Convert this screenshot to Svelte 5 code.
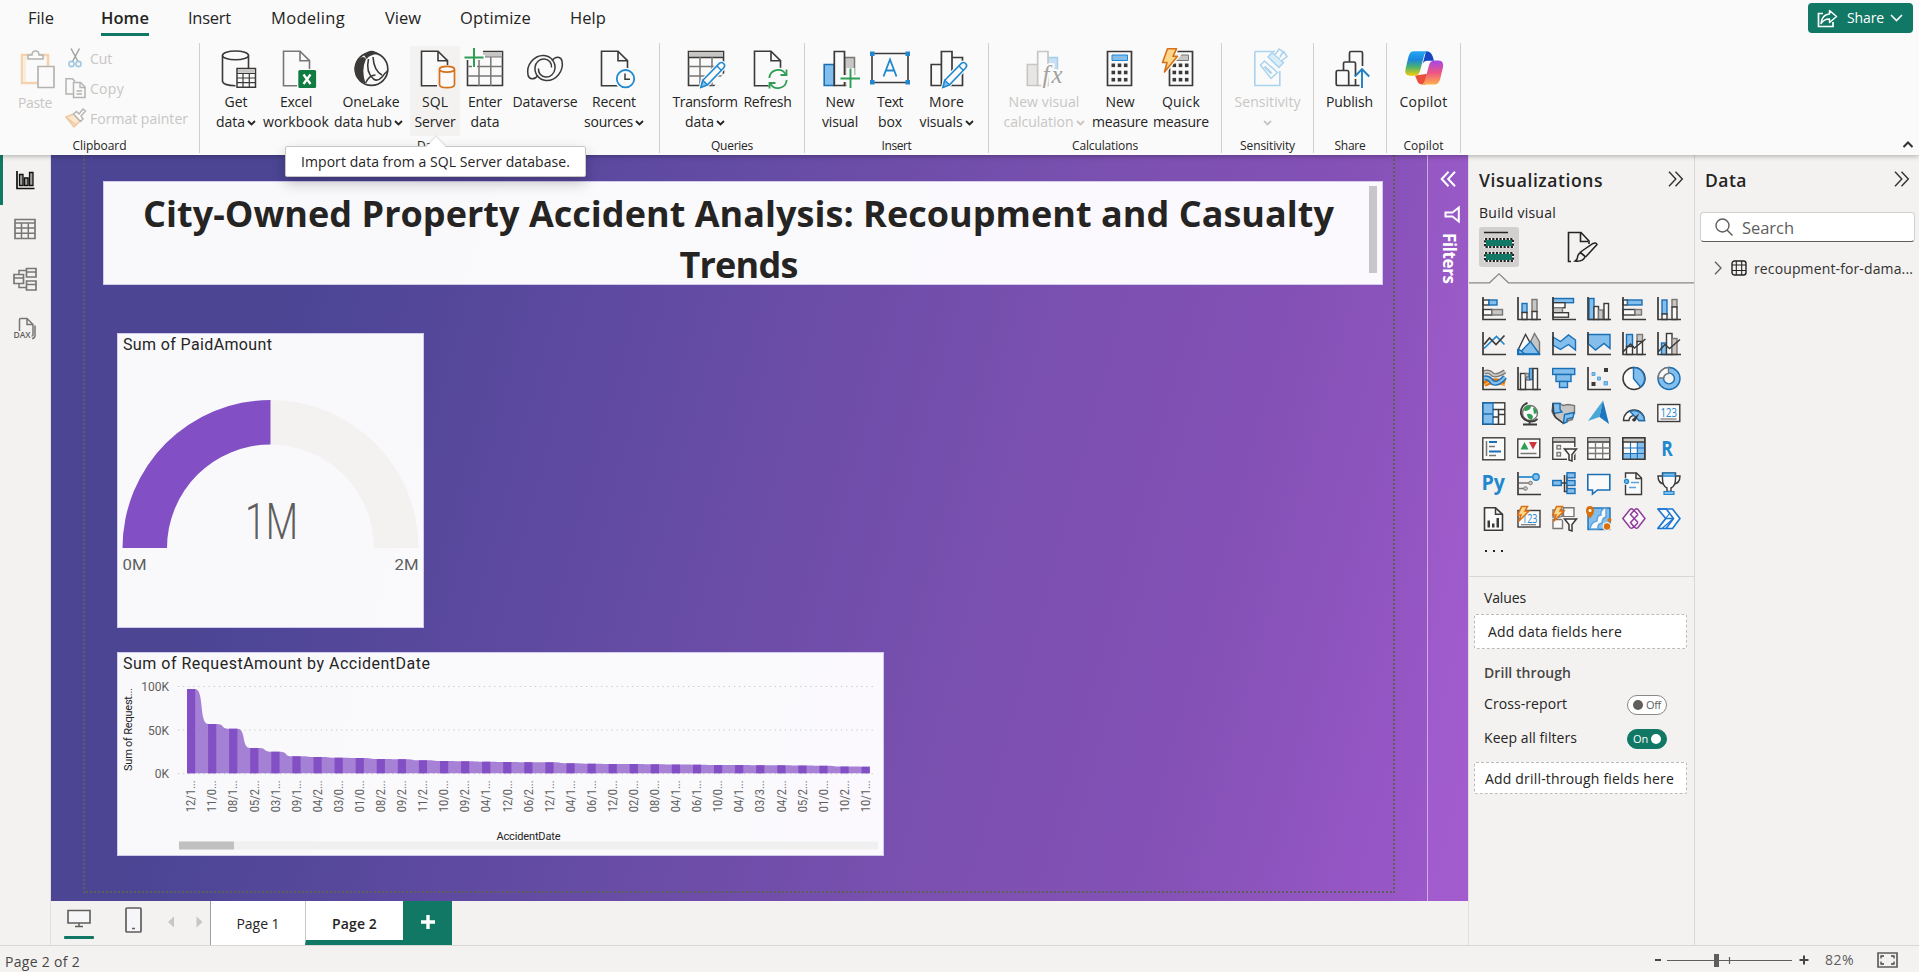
<script>
  // Spreads a text run over a given width by adjusting its tracking.
  function fit(node, width) {
    if (!width) return;
    const natural = node.getBoundingClientRect().width;
    node.style.letterSpacing = (width - natural) / node.textContent.length + 'px';
  }

  const D = '#3b3a39';
  const B = '#1a6fb5';
  const F = '#83beec';
  const G = '#c8c6c4';
  const doc = (x, c = D) =>
    `<path d="M${x} 3.2h16.5l9.5 9.5V37.8h-26z" fill="#fafafa" stroke="${c}" stroke-width="1.6"/><path d="M${x + 16.5} 3.2v9.5h9.5" fill="none" stroke="${c}" stroke-width="1.6"/>`;
  const pencil = `<path d="M16 39.3l1.8-7L34.6 15.2q2-1.6 4 .3t.2 4.2L22.5 36.8z" fill="#fafafa" stroke="#fafafa" stroke-width="4"/><path d="M16 39.3l1.8-7L34.6 15.2q2-1.6 4 .3t.2 4.2L22.5 36.8z" fill="#fafafa" stroke="#1f88cf" stroke-width="1.6"/><path d="M16 39.3l1.8-7 4.7 4.5z" fill="${F}" stroke="#1f88cf" stroke-width="1.4"/><path d="M32 18l4.5 4.5" stroke="#1f88cf" stroke-width="1.4"/>`;
  const keys = (x) => {
    let s = '';
    for (let r = 0; r < 3; r++) for (let c = 0; c < 3; c++) s += `<rect x="${x + c * 6.2}" y="${15.5 + r * 7.2}" width="3.6" height="3.6" fill="${D}"/>`;
    return s;
  };
  const swirl = 'M13 27.5C9 32.5 4 31.500 3 27C1 17 9 7 19 7.500C26 8 30.500 14 30 20.500C29.500 26 25 29.500 20.500 29C16 28.500 13 25 13.500 20.500';

  const ribbonIcons = {
    get: `<path d="M6.5 7.5V33.5q1 4 13 4.3V20h13V7.5" fill="#fafafa"/><path d="M6.5 7.5V33.5q1 3.9 13 4.3M32.500 7.5V20" fill="none" stroke="${D}" stroke-width="1.6"/><ellipse cx="19.5" cy="7.4" rx="13" ry="4.4" fill="#fafafa" stroke="${D}" stroke-width="1.6"/><path d="M21 20.5h18.5v18.8H21z" fill="#fafafa" stroke="${D}" stroke-width="1.5"/><path d="M22 21.5h16.5v3.3H22z" fill="${G}"/><path d="M21 25.5h18.5M21 30h18.5M21 34.7h18.5M27 25.5v14M33.3 25.5v14" stroke="${D}" stroke-width="1.2"/>`,
    excel: doc(7.5, '#797775') + `<rect x="21" y="21" width="20" height="20" fill="#fafafa"/><rect x="22.3" y="22" width="17.8" height="18" rx="1.5" fill="#107c41"/><path d="M27.5 26.5l7 9.5M34.5 26.5l-7 9.5" stroke="#fff" stroke-width="2.3"/>`,
    onelake: `<circle cx="20.5" cy="21" r="16.3" fill="#fafafa" stroke="${D}" stroke-width="1.7"/><path d="M13 7Q20-1 28.500 6.500q-8-1-13 4.500z" fill="${D}"/><path d="M10 9.500q3-1.500 5 1.500Q10 22 14.500 35.500Q3 31 3.500 20 4.500 13 10 9.500z" fill="${D}"/><path d="M17.500 11q-3 13 5 20 4 3 8.500-2 3-4 6-6.500M22 9q1 14 9 18M14.500 35q4-8 10-8" fill="none" stroke="${D}" stroke-width="1.6"/>`,
    sql: doc(6.5) + `<path d="M22 17h20v25H22z" fill="#f3f2f1"/><path d="M24.5 21.5v15q0 3.2 7.5 3.2t7.5-3.2v-15" fill="#fafafa" stroke="#d67119" stroke-width="1.7"/><ellipse cx="32" cy="21.3" rx="7.5" ry="2.9" fill="#fafafa" stroke="#d67119" stroke-width="1.7"/>`,
    enter: `<path d="M2.5 3.5h35v34h-35z" fill="#fafafa" stroke="${D}" stroke-width="1.6"/><path d="M3 4h34v5H3z" fill="${G}"/><path d="M2.5 9h35" stroke="#797775" stroke-width="1"/><path d="M2.5 18.5h35M2.5 28h35M14 9v29M25.8 9v29" stroke="#797775" stroke-width="1.5"/><path d="M0 0h18v7h2v5h-8v8H7v-8H0z" fill="#fafafa"/><path d="M9 0v19M-.5 9.5h19" stroke="#2f9e54" stroke-width="2"/>`,
    dataverse: `<g fill="none" stroke="${D}" stroke-width="1.5"><path d="${swirl}"/><path d="${swirl}" transform="rotate(180 20 20)"/></g>`,
    recent: doc(7.5) + `<circle cx="31.5" cy="30.7" r="11" fill="#fafafa"/><circle cx="31.5" cy="30.7" r="8.7" fill="#fafafa" stroke="#1f88cf" stroke-width="1.8"/><path d="M31 25.5v5.7h5" fill="none" stroke="${D}" stroke-width="1.5"/>`,
    transform: `<path d="M3.5 3.5h35v34h-35z" fill="#fafafa" stroke="${D}" stroke-width="1.6"/><path d="M4 4h34v5H4z" fill="${G}"/><path d="M3.5 9.5h35" stroke="${D}" stroke-width="1.3"/><path d="M3.5 18.5h35M3.5 28h35M15 9v29M27 9v29" stroke="#797775" stroke-width="1.5"/><path d="M28 40l10-14 4-2v18H24z" fill="#fafafa"/>` + pencil,
    refresh: doc(6.5) + `<circle cx="30" cy="31" r="11.5" fill="#fafafa"/><path d="M21.3 30a8.8 8.8 0 0 1 16.5-3.5M38.7 32a8.8 8.8 0 0 1-16.5 3.5" fill="none" stroke="#2f9e54" stroke-width="1.8"/><path d="M38.5 21.500v5.500h-6M21.500 40.500V35h6" fill="none" stroke="#2f9e54" stroke-width="1.8"/>`,
    newvisual: `<path d="M24.5 9.5h10v28h-10z" fill="${G}" stroke="#797775" stroke-width="1.5"/><path d="M4.2 16.5h10v21h-10z" fill="${F}" stroke="${B}" stroke-width="1.6"/><path d="M14.3 3.5h10.2v34H14.3z" fill="#fafafa" stroke="${D}" stroke-width="1.7"/><path d="M26.500 20h8v7H42v14H26.500v-7H22v-7h4.500z" fill="#fafafa"/><path d="M30.5 20.5v19.500M20.500 30.500h19.500" stroke="#2f9e54" stroke-width="1.9"/>`,
    textbox: `<path d="M2 5.5h36v29H2z" fill="#fafafa" stroke="${D}" stroke-width="1.6"/><path d="M0 3.5h4.5v4.5H0zM35.5 3.5H40v4.5h-4.5zM0 32h4.5v4.5H0zM35.5 32H40v4.5h-4.5z" fill="#1f88cf"/><path d="M13.5 28.5L20 11.5l6.5 17M16 22.500h8" fill="none" stroke="#1f88cf" stroke-width="1.8"/>`,
    more: `<path d="M25 9.5h10.5v28H25zM4.2 16.5h10.2v21H4.2zM14.4 3.5H25v34H14.4z" fill="#fafafa" stroke="${D}" stroke-width="1.7"/>` + pencil,
    nvcalc: `<path d="M24 9.5h9.5v12H24z" fill="#c7e0f4" stroke="#a6cdea" stroke-width="1.5"/><path d="M3.3 16.5h10.4v21H3.3z" fill="#e8e6e4" stroke="${G}" stroke-width="1.6"/><path d="M13.7 3.5H24v34H13.7z" fill="#fafafa" stroke="${G}" stroke-width="1.7"/><text x="18.5" y="34.5" font-family="Liberation Serif, serif" font-style="italic" font-size="25" fill="#a3a2a0" stroke="#fafafa" stroke-width="4" paint-order="stroke" textLength="20">fx</text>`,
    measure: `<path d="M7.5 3.5h24v34h-24z" fill="#fafafa" stroke="${D}" stroke-width="1.7"/><path d="M12 7h15.5v5.5H12z" fill="${F}" stroke="#1f88cf"/>` + keys(11.5),
    quick: `<path d="M8.5 3.5h23v34h-23z" fill="#fafafa" stroke="${D}" stroke-width="1.7"/><path d="M12 7h15.5v5.5H12z" fill="${G}" stroke="#797775"/>` + keys(11.5) + `<path d="M6.5.8h9L12 8.3h4.5L3.500 24l2.500-9.500H1.500z" fill="#fafafa" stroke="#fafafa" stroke-width="4"/><path d="M6.5.8h9L12 8.3h4.5L3.500 24l2.500-9.500H1.500z" fill="#fcd68a" stroke="#d67119" stroke-width="1.6" stroke-linejoin="round"/>`,
    sensitivity: `<path d="M6.8 3.5H27M31.8 23v14.5h-25v-34" fill="none" stroke="#a9d3ee" stroke-width="1.6"/><path d="M12.5 17l4-4 13 11.500-6.500 6z" fill="#fafafa" stroke="#a9d3ee" stroke-width="1.5"/><path d="M16.5 18.5l7 7" stroke="#a9d3ee" stroke-width="2.4"/><path d="M20 9l4-4.500 11.500 10L31 19.500z" fill="#d9edf9" stroke="#a9d3ee" stroke-width="1.5"/><path d="M27 7l4-6 4 2.500-3 6M32 8l4-4 3 4.500-6.500 5" fill="#fafafa" stroke="#a9d3ee" stroke-width="1.5"/>`,
    publish: `<path d="M13.5 23V15.5q0-1.5 1.5-1.5h9q1.5 0 1.5 1.5V28M19.500 14V5q0-1.5 1.5-1.5h10q1.5 0 1.5 1.5V18M29.500 37.500H8q-1.8 0-1.8-1.8V24q0-1.5 1.5-1.5h9.500q1.5 0 1.5 1.5v13.500M25.500 31v6" fill="none" stroke="${D}" stroke-width="1.7"/><path d="M32 21v19M24.8 28.500L32 21l7.200 7.500" fill="none" stroke="#1f7fc0" stroke-width="1.9"/>`,
    copilot: `<defs><linearGradient id="cpa" x1="0" y1="0" x2="0" y2="1"><stop offset="0" stop-color="#21a8f5"/><stop offset=".35" stop-color="#1b86dd"/><stop offset=".65" stop-color="#4db36b"/><stop offset="1" stop-color="#f5cb0b"/></linearGradient><linearGradient id="cpb" x1="0" y1="0" x2="0" y2="1"><stop offset="0" stop-color="#a348e8"/><stop offset=".5" stop-color="#ee5583"/><stop offset="1" stop-color="#fdb04c"/></linearGradient></defs><path d="M22 3.2q5 0 6.5 4.8l1.5 4.8h-6.5q-4 0-5 4z" fill="#1646c2"/><path d="M11 27.5l2.5 6q1 3 5 3H22l4-11z" fill="#ea4f3b"/><path d="M9.5 3.2H24q-3 .8-4 4.5L16 23q-1.2 4.7-5.5 4.7H6q-6 0-4.3-7.500L4.500 8.500Q6 3.200 9.500 3.200z" fill="url(#cpa)"/><path d="M30.5 36.6H17q3-.8 4-4.5l4-14.800q1.200-4.700 5.500-4.700h4q6 0 4.300 7.500l-2.600 11q-1.500 5.500-5.700 5.500z" fill="url(#cpb)"/>`
  };

  const groups = [
    { name: 'Data', nw: 25, w: 460, pad: 12, items: [
      { i: 'get', w: 48, a: ['Get', 23], b: ['data', 29], c: 1 },
      { i: 'excel', w: 72, a: ['Excel', 32], b: ['workbook', 66] },
      { i: 'onelake', w: 78, a: ['OneLake', 57], b: ['data hub', 58], c: 1, shift: -1 },
      { i: 'sql', w: 50, a: ['SQL', 26], b: ['Server', 41], hot: 1 },
      { i: 'enter', w: 50, a: ['Enter', 34], b: ['data', 29] },
      { i: 'dataverse', w: 70, a: ['Dataverse', 65] },
      { i: 'recent', w: 68, a: ['Recent', 44], b: ['sources', 49], c: 1 }] },
    { name: 'Queries', nw: 42, w: 145, pad: 12, items: [
      { i: 'transform', w: 66, a: ['Transform', 65], b: ['data', 29], c: 1 },
      { i: 'refresh', w: 59, a: ['Refresh', 48] }] },
    { name: 'Insert', nw: 30, w: 184, pad: 10, items: [
      { i: 'newvisual', w: 50, a: ['New', 29], b: ['visual', 36] },
      { i: 'textbox', w: 50, a: ['Text', 26], b: ['box', 24] },
      { i: 'more', w: 63, a: ['More', 35], b: ['visuals', 43], c: 1 }] },
    { name: 'Calculations', nw: 66, w: 233, pad: 7, items: [
      { i: 'nvcalc', w: 96, a: ['New visual', 71], b: ['calculation', 70], c: 1, off: 1 },
      { i: 'measure', w: 56, a: ['New', 29], b: ['measure', 56] },
      { i: 'quick', w: 66, a: ['Quick', 38], b: ['measure', 56] }] },
    { name: 'Sensitivity', nw: 55, w: 92, pad: 5, items: [
      { i: 'sensitivity', w: 81, a: ['Sensitivity', 66], c: 1, off: 1 }] },
    { name: 'Share', nw: 31, w: 73, pad: 5, items: [{ i: 'publish', w: 61, a: ['Publish', 47] }] },
    { name: 'Copilot', nw: 40, w: 74, pad: 6, items: [{ i: 'copilot', w: 61, a: ['Copilot', 48] }] }
  ];

  const menu = [['File', 26, 47], ['Home', 48, 39], ['Insert', 43, 40], ['Modeling', 74, 40], ['View', 36, 39], ['Optimize', 71, 39], ['Help', 36, 0]];

  const AX = `<path d="M1 0V22.5H24" fill="none" stroke="${D}" stroke-width="1.7"/>`;
  const r = (x, y, w, h, f = '#fafafa', s = D) => `<rect x="${x}" y="${y}" width="${w}" height="${h}" fill="${f}" stroke="${s}" stroke-width="1.4"/>`;
  const l = (d, s = D, w = 1.5) => `<path d="${d}" fill="none" stroke="${s}" stroke-width="${w}"/>`;
  const p = (d, f, s, w = 1.4) => `<path d="${d}" fill="${f}" stroke="${s}" stroke-width="${w}"/>`;
  const g7 = '#797775';
  const bolt = p('M4.5-.5h6L8 4h4L1.5 14.5 4 8H.8z', '#fcd68a', '#d67119', 1.5);
  const funnel = p('M12.5 12h12l-4.500 5.500V24l-3-1v-5.500z', '#fafafa', '#f3f2f1', 4) + p('M12.5 12h12l-4.500 5.500V24l-3-1v-5.500z', '#fafafa', D, 1.5);
  const word = (t, x, y, size, w, c, wt = 400) => `<text x="${x}" y="${y}" font-family="Open Sans, sans-serif" font-size="${size}" font-weight="${wt}" fill="${c}" textLength="${w}" lengthAdjust="spacingAndGlyphs">${t}</text>`;

  const viz = [
    r(1, 3, 6, 5) + r(7, 3, 8, 5, F, B) + r(1, 12.5, 9, 5.5) + r(10, 12.5, 10.5, 5.5, G, g7) + AX,
    r(5, 6.5, 5, 9, F, B) + r(5, 15.5, 5, 7) + r(15, 2.5, 5, 12, G, g7) + r(15, 14.5, 5, 8) + AX,
    r(1, 1.5, 20.5, 4.2, F, B) + r(1, 5.7, 12, 5) + r(1, 10.7, 9.5, 5, G, g7) + r(1, 15.7, 15.5, 4.5) + AX,
    r(2, 1.5, 5, 21, F, B) + r(7, 9.5, 4.5, 13) + r(11.5, 13, 4.5, 9.5, G, g7) + r(17, 6.5, 4.5, 16) + AX,
    r(1, 3, 4.5, 5) + r(5.5, 3, 14.5, 5, F, B) + r(1, 12.5, 12, 5.5) + r(13, 12.5, 6.5, 5.5, G, g7) + AX,
    r(5, 3, 5, 14, F, B) + r(5, 17, 5, 5.5) + r(15, 2.5, 5, 7.5, G, g7) + r(15, 10, 5, 12.5) + AX,
    l('M2 16.5L14.5 4.5l8 8', '#1f88cf', 1.7) + l('M2 12.5l5.5-6.5 6.5 6.5L22.5 3.5', D, 1.7) + AX,
    p('M12 13L17.5 1.5 22.5 10V21z', G, g7) + p('M1 18L8.5 2.5 16 16v6H1z', '#fafafa', D) + p('M1.5 22L13.500 9.500 22.500 22z', F, B) + p('M1.500 17L8 22H1.500z', F, B) + l('M.8 17v5.5H23', B),
    p('M1 5l7.5 4.5 8-6.5 7 5v10l-7-5.5-8 5L1 13z', F, B) + AX,
    p('M1 2.5h22v14l-6-5-8.500 6.500L1 11.500z', F, B) + AX,
    r(4.5, 2.5, 6, 12, F, B) + r(4.5, 14.5, 6, 8) + r(15, 2.5, 5.5, 7, G, g7) + r(15, 9.5, 5.5, 13) + l('M1 20l7.5-8 4 4 11-9') + AX,
    r(4.5, 11, 5, 11.5, F, B) + r(9.5, 1.5, 5.5, 21) + r(15, 6.5, 5, 16, G, g7) + l('M1 20l7-7.500 4.500 4L23 7.500') + AX,
    l('M2 17q9-5 21-1', '#e3770c', 6) + l('M2 18q9-7 21 1', '#f9b25c', 1.2) + l('M2 5.500q5-2 8 1.500t13-2.500', g7, 4.500) + l('M2 5.500q5-2 8 1.500t13-2.500', G, 2) + l('M2 11q5-1 8 4 5 4 13-5', B, 5) + l('M2 11q5-1 8 4 5 4 13-5', F, 2.300) + AX,
    r(3.5, 6.5, 5, 16) + r(8.5, 6.5, 3.5, 4, G, g7) + r(9.5, 10, 3.5, 3, G, g7) + r(12.5, 1.5, 3, 11, F, B) + r(16, 1.5, 4.5, 21) + AX,
    r(.7, 1.5, 22, 6, F, B) + r(4, 7.5, 15, 7, F, B) + r(7.5, 14.5, 8, 6, F, B),
    AX + `<path d="M17 1h4v4h-4zM4.5 15h4v4h-4z" fill="${D}"/><path d="M5 5.5h3v3H5zM10.5 10h3v3h-3zM17 14.5h3.5v3.5H17z" fill="${F}" stroke="#5ba3dc"/>`,
    `<circle cx="12" cy="11.5" r="11" fill="#fafafa" stroke="${D}" stroke-width="1.5"/>` + p('M11.5.5v11l7 8.5A11 11 0 0 0 11.500.5z', F, B),
    `<circle cx="12" cy="11.5" r="8.2" fill="none" stroke="${B}" stroke-width="7"/><circle cx="12" cy="11.5" r="8.2" fill="none" stroke="${F}" stroke-width="4.2"/>` + p('M1 11A11 11 0 0 1 11.5.5V6.500A5.500 5.500 0 0 0 6.500 11z', '#fafafa', g7),
    r(.8, .8, 22, 21.5) + `<path d="M1 1h10v21H1z" fill="${F}" stroke="${B}" stroke-width="1.4"/>` + l('M1 12h10', B) + l('M11 7.5h12M16.5 7.500V22M11 15h5.500M16.500 12.500h6.500M20 12.500'),
    `<circle cx="13" cy="11" r="7.5" fill="#fafafa" stroke="${g7}" stroke-width="1.4"/><path d="M8 5q4-3 6-1 0 4-5 5-2 0-2-1zM16 6q4 0 4 5l-3 1zM10 12q4-1 6 2l-1 4q-5-1-5-6z" fill="#2f9e54"/>` + l('M10.500.8Q3 4 4 12q2 7 10 7.500 4 0 6.500-2.500M12.500 19.500v3M6 22.500h14', D, 1.8),
    p('M1 1.5h7l3 2 5-1 6.5 1v8l-2 2v4l-5 1.500-4 2.500-5-4-4.500-4-2-4z', G, g7) + p('M1 1.500h7v6l2 2.500-8 1.500z', F, B) + p('M12.500 12.500l9.500-2-1 5-6 1.500v3l-3.500 1.500z', F, B) + l('M1 1.500v8l2.500 6L11 21'),
    `<path d="M16-1.5L1 19l11.500-4z" fill="#49a8d8"/><path d="M16-1.5L12.5 15l9.500 7z" fill="#1c76c0"/>`,
    p('M1.500 18.500A10.500 10.500 0 0 1 22.500 18.500H17a5 5 0 0 0-10 0z', '#fafafa', D) + p('M8 9.500A10.500 10.500 0 0 1 22.500 18.500H17L12 13.500z', F, B) + `<path d="M10 17.500L17.500 11 13.500 19q-3 1.500-3.500-1.500z" fill="${D}"/>`,
    r(.8, 2.5, 22, 17) + word('123', 3.5, 14.5, 12, 16.5, '#1f88cf') + l('M3.5 17h16', g7, 1.2),
    r(.8, .8, 22, 22) + l('M4.5 4v15', g7) + l('M7 5h8M7 14.5h12', B, 1.8) + l('M7 9.5h6M7 18.5h7', g7),
    r(.8, 2, 22, 18.5) + `<path d="M3.5 12.5L7.5 5l4 7.500z" fill="#2f9e54"/><path d="M12 5h8l-4 7.500z" fill="#d13438"/>` + l('M3.5 16.5h16', g7),
    r(.8, .8, 22, 21.5) + `<path d="M1.5 1.5h20.6v3H1.500z" fill="${G}"/>` + l('M1 5h22') + r(5, 8.5, 3.5, 3.5, '#fafafa', g7) + r(5, 15.5, 3.5, 3.5, '#fafafa', g7) + funnel,
    r(.8, .8, 22, 21.5) + `<path d="M1.5 1.5h20.6v3H1.500z" fill="${G}"/>` + l('M1 5h22') + l('M1 11h22M1 16.5h22M8.5 5v17.500M15.700 5v17.500', g7, 1.3),
    r(.8, .8, 22, 21.5) + `<path d="M1.5 1.5h20.6v3H1.500z" fill="${G}"/><path d="M15 5h7.5v17H15zM1.500 16.500H15V22H1.500z" fill="${F}"/>` + l('M1 11h22M1 16.5h22M8.5 5v17.500M15.300 5v17.500', B, 1.1) + l('M1 5h22M.8.8h22v21.5H.8z'),
    word('R', 4.3, 19, 21, 11.5, '#1f88cf', 700),
    word('Py', -.5, 18, 21, 23.5, '#1f88cf', 700),
    AX + l('M2 5h14', '#1f88cf', 1.7) + l('M2 11h10M2 16.5h5', g7) + `<circle cx="19" cy="5" r="3.2" fill="${F}" stroke="#1f88cf" stroke-width="1.4"/><circle cx="13.5" cy="11" r="1.8" fill="${G}" stroke="${g7}"/><circle cx="8.5" cy="16.5" r="1.8" fill="${G}" stroke="${g7}"/>`,
    l('M9 11h6M15 3.5v16M12.500 3v16.500h2.500') + r(.8, 8.5, 8.5, 5, F, B) + r(15, .8, 8, 5, F, B) + r(15, 8.5, 8, 5, F, B) + r(15, 16.5, 8, 5, F, B),
    p('M.8 2.5h22v15.500H10.500L5.500 22v-4H.8z', '#fafafa', B, 1.6),
    p('M3.5 1h11l5 5v16.500h-16z', '#fafafa', D) + l('M14 1v5.500h5.500') + l('M9 10.500h8M7 15.500h7', '#5ba3dc') + `<circle cx="4.5" cy="9.5" r="3.5" fill="#f3f2f1"/><circle cx="4.5" cy="9.5" r="2" fill="${F}" stroke="#1f88cf" stroke-width="1.3"/>`,
    p('M6 4H1q0 8 7 8M18 4h5q0 8-7 8', '#fafafa', D) + p('M5.5 1h13v6q0 7-4.500 9v3.500h-4V16q-4.500-2-4.500-9z', '#fafafa', D) + `<path d="M6 1.2h12v3H6zM7 19.500h10v3H7z" fill="${F}" stroke="#1f88cf" stroke-width="1.2"/>`,
    p('M2.5.8h11l7 6.500v16h-18z', '#fafafa', D, 1.6) + l('M13.5.8v6.500h7') + `<path d="M5.5 13.5h2.5v7H5.500zM10 16.500h2.500v4H10zM14.500 11H17v9.500h-2.500z" fill="${D}"/>`,
    r(1, 3.5, 22, 16.5) + word('123', 5, 15.5, 12, 15.5, '#1f88cf') + l('M4 17.7h15', g7, 1.2) + bolt,
    p('M11.5.8h10.500v9H11.500zM1 12.500h9.500v9H1zM1 3h9v7H1z', '#fafafa', g7) + bolt + funnel,
    r(1, 1, 22, 21.5, F, B) + p('M18 1q-5 2-4 7-4 0-4 6-6 1-7 8h8q-1-5 4-6 0-5 4-6V1z', '#fafafa', '#5ba3dc') + `<path d="M3-1Q-1-1-1 4q0 3 4 7.500Q7 7 7 4q0-5-4-5z" fill="#d9700a"/><circle cx="3" cy="3.5" r="1.5" fill="#fff"/><circle cx="20" cy="19.5" r="4.5" fill="#f3f2f1"/><circle cx="20" cy="19.5" r="3.2" fill="#d9700a"/><circle cx="22.5" cy="13" r="2" fill="#d9700a"/>`,
    `<g fill="#fafafa" stroke="#8f3a9c" stroke-width="1.5"><path d="M.8 11.5L8 2.500q1.500-1.500 3 0l1 1 1-1q1.500-1.500 3 0l7 9-7 9q-1.500 1.500-3 0l-1-1-1 1q-1.500 1.500-3 0z"/><path d="M12 3.500L8.500 7.500l7.500 8M16 7.500l-7.500 8 3.500 4.500M12 3.500l4 4M12 20l4-4.500M20 7.500" fill="none"/></g>`,
    `<g fill="#fafafa" stroke="#1a77d2" stroke-width="1.6" stroke-linejoin="round"><path d="M.8 2H15.500l7.500 9.500-7.500 10H.8l8-10z"/><path d="M.8 2l8.500 0 7.200 9.500M8.800 11.500h7.700L9 21.500M15.500 2" fill="none"/><path d="M.8 21.500L12.500 6.500M5 21.500L16.500 11.500" fill="none" stroke-width="1.2"/></g>`
  ];

  const tops = [689, 724, 728.7, 748, 751.7, 756.3, 757, 757.7, 758, 759, 759.2, 760.3, 761, 761.3, 761.7, 762, 762.2, 762.3, 763.3, 763.7, 764, 764, 764.3, 764.6, 764.7, 765, 765, 765.2, 765.3, 765.6, 765.8, 766.6, 766.7];
  const dates = ['12/1', '11/0', '08/1', '05/2', '03/1', '09/1', '04/2', '03/0', '01/0', '08/2', '09/2', '11/2', '10/0', '09/2', '04/1', '12/0', '06/2', '12/1', '04/1', '06/1', '12/0', '02/0', '08/0', '04/1', '06/1', '10/0', '04/1', '03/3', '04/2', '05/2', '01/0', '10/2', '10/1'];
  // Plot space starts at the card's top left corner.
  const bars = tops.map((y, i) => ({ x: 69 + i * 21.08, y: y - 653, label: dates[i] + '...' }));
  const BW = 8.2;
  const base = 120.3;
  let ribbonPath = `M${bars[0].x} ${base}V${bars[0].y}`;
  bars.forEach((b, i) => {
    const e = b.x + BW;
    ribbonPath += `H${e}`;
    const n = bars[i + 1];
    if (n) ribbonPath += `C${e + 9} ${b.y} ${n.x - 9} ${n.y} ${n.x} ${n.y}`;
  });
  ribbonPath += `V${base}Z`;
</script>

{#snippet t(text, w)}<span class="t" use:fit={w}>{text}</span>{/snippet}
{#snippet caret()}<svg class="caret" width="9" height="6" viewBox="0 0 9 6"><path d="M1 1l3.500 3.500L8 1" fill="none" stroke="currentColor" stroke-width="1.8" /></svg>{/snippet}
{#snippet double(flip, c)}<svg width="16" height="16" viewBox="0 0 16 16" style:transform={flip ? 'scaleX(-1)' : null}><path d="M1 .8L7.800 8 1 15.200M7.500.8L14.300 8l-6.800 7.200" fill="none" stroke={c} stroke-width={flip ? 2 : 1.4} /></svg>{/snippet}

<div class="app">
  <header>
    <div class="menubar">
      <nav>
        {#each menu as [name, w, gap]}
          <div class="tab" class:active={name === 'Home'} style:width="{w}px" style:margin-right="{gap}px">{@render t(name, w)}</div>
        {/each}
      </nav>
      <button class="share">
        <svg width="21" height="19" viewBox="0 0 21 19"><path d="M6 4.500H1.500v13h14.500V13" fill="none" stroke="#fff" stroke-width="1.7" /><path d="M12.500 1.500l7 6-7 6V10q-5-.3-8.500 4.500Q5 5.500 12.500 5z" fill="none" stroke="#fff" stroke-width="1.5" stroke-linejoin="round" /></svg>
        {@render t('Share', 37)}
        <svg width="13" height="8" viewBox="0 0 13 8"><path d="M1 1l5.500 5.500L12 1" fill="none" stroke="#fff" stroke-width="1.6" /></svg>
      </button>
    </div>
    <div class="ribbon">
      <section class="group clipboard">
        <div class="clip off">
          <div class="paste">
            <svg width="36" height="40" viewBox="0 0 36 40"><path d="M2 6h26v28H2z" fill="#fafafa" stroke="#f5d3b0" stroke-width="2.6" /><path d="M5 8.500h20M5 8v24" stroke="#fbe7cd" stroke-width="1.5" /><path d="M8 10V6h4q0-4 3.500-4T19 6h4v4z" fill="#fafafa" stroke="#b5b3b1" stroke-width="1.5" /><path d="M18 17.500h16v21H18z" fill="#fafafa" stroke="#b5b3b1" stroke-width="1.7" /></svg>
            {@render t('Paste', 34)}
          </div>
          <div class="clips">
            <div><svg width="22" height="20" viewBox="0 0 22 20"><path d="M6 .5l7 13M14.500.5l-7 13" stroke="#a3a2a0" stroke-width="1.5" /><circle cx="6.500" cy="16" r="2.600" fill="none" stroke="#a3c8e0" stroke-width="1.6" /><circle cx="13.500" cy="16" r="2.600" fill="none" stroke="#a3c8e0" stroke-width="1.6" /></svg>{@render t('Cut', 22)}</div>
            <div><svg width="22" height="20" viewBox="0 0 22 20"><path d="M8 16H1V.8h6.500L10 3.500" fill="none" stroke="#b5b3b1" stroke-width="1.5" /><path d="M8.500 4.500h7l4.500 4.500v10.500H8.500z" fill="none" stroke="#b5b3b1" stroke-width="1.5" /><path d="M15 4.500V9.500h5M11.500 13h5.500M11.500 16h5.500" fill="none" stroke="#b5b3b1" stroke-width="1.3" /></svg>{@render t('Copy', 34)}</div>
            <div><svg width="22" height="20" viewBox="0 0 22 20"><path d="M1 9l8-3 6 7-6 6z" fill="#fbe7cd" stroke="#f0c79d" stroke-width="1.5" /><path d="M2 10l9 7" stroke="#f0c79d" stroke-width="1.5" /><path d="M8.500 6l3-2.500 2.500 2.500L18 1l2.500 2L16 8l2 3-2.500 2.500z" fill="#fafafa" stroke="#b5b3b1" stroke-width="1.4" /></svg>{@render t('Format painter', 98)}</div>
          </div>
        </div>
        <footer>{@render t('Clipboard', 54)}</footer>
      </section>
      {#each groups as g}
        <section class="group" style:width="{g.w}px">
          <div class="items" style:padding-left="{g.pad}px">
            {#each g.items as it}
              <div class="item" class:hot={it.hot} class:off={it.off} style:width="{it.w}px">
                <svg class="ri" width="40" height="40" viewBox="0 0 40 40">{@html ribbonIcons[it.i]}</svg>
                <div class="line">{@render t(it.a[0], it.a[1])}</div>
                <div class="line" class:wide={it.shift}>{#if it.b}{@render t(it.b[0], it.b[1])}{/if}{#if it.c}{@render caret()}{/if}</div>
                {#if it.hot}<div class="tooltip">{@render t('Import data from a SQL Server database.', 269)}</div>{/if}
              </div>
            {/each}
          </div>
          <footer>{@render t(g.name, g.nw)}</footer>
        </section>
      {/each}
      <svg class="collapse" width="12" height="8" viewBox="0 0 12 8"><path d="M1.500 7L6 2.500 10.500 7" fill="none" stroke="#323130" stroke-width="2" /></svg>
    </div>
  </header>

  <main>
    <aside class="rail">
      <div class="view on"><svg width="24" height="24" viewBox="0 0 24 24"><path d="M3 3v17.500h17.500" fill="none" stroke="#111" stroke-width="1.7" /><path d="M5.500 6.500h3.500v11H5.500zM10.500 10h3.500v7.500h-3.500zM15.500 4.500H19v13h-3.500z" fill="#a19f9d" stroke="#111" stroke-width="1.3" /></svg></div>
      <div class="view"><svg width="24" height="24" viewBox="0 0 24 24"><path d="M2 2.500h20v19H2z" fill="none" stroke="#797775" stroke-width="1.7" /><path d="M2 6h20M2 11h20M2 16.300h20M8.500 6v15M15.300 6v15" stroke="#797775" stroke-width="1.5" /></svg></div>
      <div class="view"><svg width="24" height="24" viewBox="0 0 24 24"><path d="M6 7V3.500h7M6 17v3.500h7" fill="none" stroke="#797775" stroke-width="1.5" /><path d="M1 7.500h9.500v9H1zM13.500 1.500H23v8.500h-9.500zM13.500 14H23v9h-9.500zM1 11h9.500M13.500 5H23M13.500 17.500H23" fill="none" stroke="#797775" stroke-width="1.7" /></svg></div>
      <div class="view"><svg width="24" height="24" viewBox="0 0 24 24"><path d="M6.500 14V2.500q0-1 1-1H14l6 6V18q0 1-1.500 1M14 1.500v6h6M22 8.500V19q-.5 2.500-3 2.500" fill="none" stroke="#797775" stroke-width="1.5" /><text x=".5" y="21.300" font-family="Open Sans, sans-serif" font-size="8.500" font-weight="600" fill="#605e5c" textLength="17">DAX</text></svg></div>
    </aside>

    <div class="center">
      <div class="stage">
        <div class="canvas">
          <div class="page"></div>
          <div class="card heading">
            <div class="h">{@render t('City-Owned Property Accident Analysis: Recoupment and Casualty', 1191)}<br />{@render t('Trends', 118)}</div>
            <div class="thumb"></div>
          </div>
          <div class="card gauge">
            <svg width="306" height="294" viewBox="0 0 306 294" font-family="Roboto, sans-serif">
              <text x="5" y="15.500" font-size="16" fill="#252423" textLength="149">Sum of PaidAmount</text>
              <path d="M152.500 66A148 148 0 0 1 300.500 214H256A103.500 103.500 0 0 0 152.500 110.500z" fill="#f3f2f1" />
              <path d="M152.500 66A148 148 0 0 0 4.500 214H49A103.500 103.500 0 0 1 152.500 110.500z" fill="#824fc4" />
              <text x="127" y="204.500" font-size="50" font-weight="300" fill="#605e5c" textLength="53" lengthAdjust="spacingAndGlyphs">1M</text>
              <text x="4.500" y="235.500" font-size="15" fill="#605e5c" textLength="24" lengthAdjust="spacingAndGlyphs">0M</text>
              <text x="276.500" y="235.500" font-size="15" fill="#605e5c" textLength="24" lengthAdjust="spacingAndGlyphs">2M</text>
            </svg>
          </div>
          <div class="card chart">
            <svg width="766" height="202" viewBox="0 0 766 202" font-family="Roboto, sans-serif">
              <text x="5" y="15.500" font-size="16" fill="#252423" textLength="307">Sum of RequestAmount by AccidentDate</text>
              {#each [['100K', 33.5], ['50K', 77], ['0K', 120.7]] as [k, y]}
                <path d="M60 {y}H757" stroke="#c8c6c4" stroke-dasharray="1.2 3.9" />
                <text x="51" y={y + 4.5} font-size="12" fill="#605e5c" text-anchor="end">{k}</text>
              {/each}
              <text transform="translate(14 118) rotate(-90)" font-size="11" fill="#252423" textLength="83">Sum of Request...</text>
              <path d={ribbonPath} fill="#824fc4" opacity=".7" />
              {#each bars as b}
                <rect x={b.x} y={b.y} width={BW} height={base - b.y} fill="#824fc4" />
                <text transform="translate({b.x + 8.3} 159.3) rotate(-90)" font-size="12" fill="#605e5c" textLength="32" lengthAdjust="spacingAndGlyphs">{b.label}</text>
              {/each}
              <text x="378.500" y="186.500" font-size="11" fill="#252423" textLength="64">AccidentDate</text>
              <rect x="61" y="188.500" width="699" height="8" fill="#f0f0f0" />
              <rect x="61" y="188.500" width="55" height="8" fill="#c0c0c0" />
            </svg>
          </div>
        </div>
        <aside class="filters">
          {@render double(true, '#fff')}
          <svg width="16" height="17" viewBox="0 0 16 17"><path d="M14.800 1.500v14L8.500 10.500H1.500v-4h7z" fill="none" stroke="#fff" stroke-width="2" /></svg>
          <span class="vert">Filters</span>
        </aside>
      </div>
      <div class="pages">
        <div class="device on"><svg width="24" height="19" viewBox="0 0 24 19"><path d="M1 1.500h22v12.500H1z" fill="#f6f6f8" stroke="#605e5c" stroke-width="1.6" /><path d="M12 14v3.500M8 17.500h8" stroke="#605e5c" stroke-width="1.5" /></svg></div>
        <div class="device phone"><svg width="17" height="26" viewBox="0 0 17 26"><rect x="1" y="1" width="15" height="24" rx="1" fill="#f6f6f8" stroke="#605e5c" stroke-width="1.7" /><path d="M7 21.500h3" stroke="#605e5c" stroke-width="1.5" /></svg></div>
        <svg class="arrows" width="34" height="12" viewBox="0 0 34 12"><path d="M6 .5v11L0 6zM28.500.5v11l6-5.500z" fill="#c8c6c4" /></svg>
        <div class="ptab one">{@render t('Page 1', 43)}</div>
        <div class="ptab two">{@render t('Page 2', 45)}</div>
        <div class="add"><svg width="14" height="14" viewBox="0 0 14 14"><path d="M7 0v14M0 7h14" stroke="#fff" stroke-width="3.4" /></svg></div>
      </div>
    </div>

    <aside class="viz">
      <div class="top">{@render t('Visualizations', 124)}{@render double(false, '#323130')}</div>
      <div class="build">{@render t('Build visual', 77)}</div>
      <div class="modes">
        <div class="mode on"><svg width="40" height="40" viewBox="0 0 40 40"><path d="M5 5.500h24" stroke="#252423" stroke-width="1.5" /><path d="M6 12h28v8H6zM6 26h28v8H6z" fill="#117865" stroke="#fff" stroke-width="2" /><path d="M6 12h28v8H6zM6 26h28v8H6z" fill="none" stroke="#252423" stroke-width="2" stroke-dasharray="2.3 1.3" /></svg></div>
        <div class="mode"><svg width="40" height="40" viewBox="0 0 40 40"><path d="M11 34.500H8.500v-29h12.500l8 8.500v3M20.500 5.500v9H28" fill="none" stroke="#252423" stroke-width="1.6" /><path d="M20.500 25L33 16.500q3-1.500 4 1L26 29.500q-3-.5-5.500-4.500zM20 26q4 1 5 4-2 5-10 4 3-2 2.500-4 .5-3 2.500-4z" fill="#f3f2f1" stroke="#252423" stroke-width="1.5" /></svg></div>
      </div>
      <svg class="notch" width="225" height="11" viewBox="0 0 225 11"><path d="M0 9.800H20.500L30 .8l9.500 9H225" fill="none" stroke="#8a8886" stroke-width="1.2" /></svg>
      <div class="grid">
        {#each viz as v}<svg width="24" height="24" viewBox="0 0 24 24">{@html v}</svg>{/each}
      </div>
      <div class="dots"><i></i><i></i><i></i></div>
      <div class="wells">
        <div class="lab values">{@render t('Values', 42)}</div>
        <div class="well first">{@render t('Add data fields here', 134)}</div>
        <div class="lab drill">{@render t('Drill through', 87)}</div>
        <div class="row">{@render t('Cross-report', 83)}<span class="toggle"><i></i>{@render t('Off', 15)}</span></div>
        <div class="row">{@render t('Keep all filters', 93)}<span class="toggle yes">{@render t('On', 15)}<i></i></span></div>
        <div class="well">{@render t('Add drill-through fields here', 189)}</div>
      </div>
    </aside>

    <aside class="data">
      <div class="top">{@render t('Data', 42)}{@render double(false, '#323130')}</div>
      <div class="search"><svg width="18" height="18" viewBox="0 0 18 18"><circle cx="7.500" cy="7.500" r="6.500" fill="none" stroke="#605e5c" stroke-width="1.4" /><path d="M12 12l5.500 5.500" stroke="#605e5c" stroke-width="1.5" /></svg>{@render t('Search', 52)}</div>
      <div class="tree">
        <svg width="8" height="14" viewBox="0 0 8 14"><path d="M1 .8L7 7l-6 6.200" fill="none" stroke="#605e5c" stroke-width="1.3" /></svg>
        <svg width="16" height="16" viewBox="0 0 16 16"><rect x="1" y="1" width="14" height="14" rx="2.500" fill="none" stroke="#252423" stroke-width="1.4" /><path d="M1 5h14M1 10.500h14M5.300 1v14M10.700 1v14" stroke="#252423" stroke-width="1.1" /></svg>
        {@render t('recoupment-for-dama...', 159)}
      </div>
    </aside>
  </main>

  <div class="status">
    {@render t('Page 2 of 2', 75)}
    <div class="zoom">
      <svg width="154" height="16" viewBox="0 0 154 16"><path d="M0 8h6M144.500 8h9M149 3.500v9" stroke="#484644" stroke-width="2" /><path d="M12 8.500h125M74.500 5v7" stroke="#605e5c" stroke-width="1.2" /><path d="M59 2h5v13h-5z" fill="#605e5c" /></svg>
      <span class="pct">{@render t('82%', 29)}</span>
      <svg width="21" height="16" viewBox="0 0 21 16"><path d="M1 1h19v14H1z" fill="none" stroke="#605e5c" stroke-width="1.7" /><path d="M4 6.500V4h3M14 4h3v2.500M17 9.500V12h-3M7 12H4V9.500" fill="none" stroke="#484644" stroke-width="1.3" /></svg>
    </div>
  </div>
</div>

<style>
  :global(body) { margin: 0; overflow: hidden; }
  .app { width: 1919px; height: 972px; display: flex; flex-direction: column; font: 14px/20px "Open Sans", "Noto Sans", sans-serif; color: #252423; background: #f3f2f1; overflow: hidden; }
  .app :global(svg) { display: block; flex: none; overflow: visible; }
  .t { display: inline-block; white-space: nowrap; flex: none; }

  header { height: 155px; flex: none; background: #fafafa; box-shadow: 0 1px 5px rgba(0, 0, 0, .3); position: relative; z-index: 3; }
  .menubar { height: 43px; display: flex; justify-content: space-between; }
  nav { display: flex; padding-left: 28px; }
  .tab { height: 33px; font-size: 16.5px; line-height: 35px; border-bottom: 3px solid transparent; }
  .tab.active { font-weight: 600; border-color: #117865; }
  .share { margin: 3px 6px 0 0; width: 105px; height: 30px; border: 0; border-radius: 4px; background: #117865; color: #fff; font: 14px/28px "Open Sans", sans-serif; display: flex; align-items: center; gap: 9px; padding: 0 0 0 9px; }
  .share svg:last-child { margin-left: -3px; }

  .ribbon { display: flex; height: 112px; position: relative; }
  .group { height: 110px; box-sizing: border-box; border-right: 1px solid #d2d0ce; display: flex; flex-direction: column; flex: none; }
  .clipboard { width: 200px; }
  .group footer { margin-top: auto; height: 15px; line-height: 16px; font-size: 12px; text-align: center; }
  .items { display: flex; }
  .item { height: 90px; margin-top: 3px; display: flex; flex-direction: column; align-items: center; position: relative; }
  .item.hot { background: #f3f2f1; }
  .ri { margin: 2px 0 4px; }
  .line { display: flex; align-items: center; gap: 2px; height: 20px; }
  .line.wide { margin-left: -5px; }
  .off { color: #c8c6c4; }
  .caret { margin-top: 2px; }
  .tooltip { position: absolute; left: -125px; top: 100px; width: 301px; height: 31px; box-sizing: border-box; border: 1px solid #c8c6c4; border-radius: 2px; background: #fff; padding-left: 15px; line-height: 30px; box-shadow: 0 6px 14px rgba(0, 0, 0, .22); z-index: 5; }
  .tooltip::before { content: ""; position: absolute; left: 143px; top: -7px; width: 14px; height: 14px; background: #fff; transform: rotate(45deg); box-shadow: -1px -1px 2px rgba(0, 0, 0, .12); clip-path: polygon(-20% -20%, 120% -20%, -20% 120%); }
  .clip { display: flex; }
  .paste { width: 36px; margin: 6px 0 0 20px; display: flex; flex-direction: column; align-items: center; gap: 5px; }
  .paste :global(.t) { margin-left: -6px; line-height: 18px; }
  .clips { margin-left: 9px; padding-top: 5px; display: flex; flex-direction: column; gap: 10px; }
  .clips div { display: flex; gap: 3px; align-items: center; height: 20px; line-height: 19px; }
  .collapse { position: absolute; right: 5px; top: 97px; }

  main { flex: 1; display: flex; min-height: 0; }
  .rail { width: 51px; box-sizing: border-box; border-right: 1px solid #e1dfdd; }
  .view { height: 50px; box-sizing: border-box; padding: 0 0 2px 13px; display: flex; align-items: center; }
  .view.on { border-left: 3px solid #117865; padding: 0 0 0 11px; }
  .center { width: 1417px; display: flex; flex-direction: column; }
  .stage { height: 746px; display: flex; background: linear-gradient(105deg, #4b4594 17%, #5e4aa1 37%, #7b50b0 66%, #8451b6 80%, #9c58ca 98%); }
  .canvas { width: 1376px; position: relative; overflow: hidden; }
  .page { position: absolute; left: 32px; top: -4px; width: 1308px; height: 740px; border: 2px dotted #605e5c; border-top: 0; }
  .card { position: absolute; box-sizing: border-box; border: 1px solid rgba(200, 190, 230, .8); background: rgba(255, 255, 255, .97); }
  .heading { left: 52px; top: 26px; width: 1280px; height: 104px; overflow: hidden; }
  .h { text-align: center; margin: 6px 0 0 -8px; width: 1285px; font: 700 36px/51px "Open Sans", sans-serif; }
  .h :global(.t) { line-height: 38px; }
  .thumb { position: absolute; right: 5px; top: 4px; width: 8px; height: 87px; background: #c8c6c8; }
  .gauge { left: 66px; top: 178px; width: 307px; height: 295px; }
  .chart { left: 66px; top: 497px; width: 767px; height: 204px; }
  .filters { width: 41px; box-sizing: border-box; border-left: 1px solid rgba(255, 255, 255, .5); background: rgba(190, 110, 225, .2); padding: 16px 0 0 12px; }
  .filters > :global(svg + svg) { margin: 19px 0 0 4px; }
  .vert { display: block; writing-mode: vertical-rl; color: #fff; font-weight: 700; font-size: 17px; line-height: 20px; margin: 10px 0 0 -1px; letter-spacing: -.4px; }

  .pages { height: 44px; display: flex; }
  .device { width: 30px; margin-left: 13px; display: flex; flex-direction: column; align-items: center; }
  .device svg { margin-top: 9px; }
  .device.on svg { margin: 8px 0 0 -1px; }
  .device.on::after { content: ""; width: 30px; height: 3px; border-radius: 1px; background: #117865; margin-top: 8px; }
  .device.phone { margin-left: 24px; }
  .device.phone svg { margin-top: 6px; }
  .arrows { margin: 15px 8px 0 20px; }
  .ptab { box-sizing: border-box; background: #fff; border-left: 1px solid #a19f9d; text-align: center; line-height: 45px; }
  .one { width: 95px; }
  .two { width: 98px; border-bottom: 5px solid #117865; font-weight: 600; border-left-color: #c8c6c4; }
  .add { width: 49px; background: #117865; display: flex; align-items: center; justify-content: center; box-sizing: border-box; padding-bottom: 3px; }

  .viz { width: 226px; box-sizing: border-box; border-left: 1px solid #e1dfdd; }
  .top { font-size: 17.5px; font-weight: 600; display: flex; justify-content: space-between; align-items: center; height: 30px; padding: 9px 10px 0 10px; }
  .top :global(.t) { margin-top: 2px; }
  .build { padding-left: 10px; height: 20px; margin-top: 9px; }
  .modes { display: flex; gap: 41px; padding: 4px 0 0 10px; height: 40px; }
  .mode { width: 40px; height: 40px; border-radius: 3px; }
  .mode.on { background: #d2d0ce; }
  .notch { margin-top: 6px; width: 225px; }
  .grid { display: grid; grid-template-columns: repeat(6, 24px); grid-auto-rows: 24px; gap: 11px; padding: 13px 0 0 13px; }
  .dots { display: flex; gap: 6px; padding: 19px 0 0 16px; }
  .dots i { width: 2px; height: 2px; background: #252423; }
  .wells { margin-top: 24px; border-top: 1px solid #d9d7d5; padding: 0 7px 0 5px; font-size: 14px; }
  .lab { padding-left: 10px; height: 20px; }
  .values { margin-top: 11px; }
  .well { box-sizing: border-box; height: 32px; line-height: 31px; border: 1px dashed #bebbb8; background: #fff; border-radius: 2px; padding-left: 10px; margin-top: 6px; }
  .well.first { height: 35px; line-height: 34px; padding-left: 13px; margin-top: 6px; }
  .drill { margin-top: 14px; font-weight: 600; color: #484644; }
  .row { display: flex; justify-content: space-between; align-items: center; height: 34px; padding: 0 20px 0 10px; line-height: 20px; }
  .drill + .row { margin-top: 5px; }
  .row > :global(.t) { margin-top: -2px; }
  .toggle { box-sizing: border-box; width: 40px; height: 20px; border: 1px solid #8a8886; border-radius: 10px; background: #fff; display: flex; align-items: center; gap: 3px; padding: 0 5px; font-size: 11px; color: #605e5c; line-height: 18px; }
  .toggle i { width: 10px; height: 10px; border-radius: 50%; background: #605e5c; flex: none; }
  .toggle.yes { background: #117865; border-color: #117865; color: #fff; }
  .toggle.yes i { background: #fff; }

  .data { flex: 1; border-left: 1px solid #d9d7d5; }
  .data .top { padding: 9px 9px 0 10px; }
  .search { box-sizing: border-box; margin: 18px 4px 0 5px; height: 30px; border: 1px solid #d2d0ce; border-bottom-color: #605e5c; border-radius: 4px; background: #fff; display: flex; align-items: center; gap: 9px; padding-left: 14px; font-size: 16.5px; color: #605e5c; }
  .search :global(.t) { margin-top: 2px; }
  .tree { display: flex; align-items: center; height: 20px; margin-top: 16px; padding-left: 19px; color: #323130; }
  .tree :global(.t) { margin-top: 1px; }
  .tree svg + svg { margin: 0 7px 0 9px; }

  .status { height: 27px; box-sizing: border-box; border-top: 1px solid #d9d7d5; flex: none; display: flex; justify-content: space-between; padding: 6px 21px 0 5px; color: #484644; line-height: 20px; }
  .zoom { display: flex; align-items: flex-start; }
  .pct { color: #605e5c; margin: -2px 23px 0 16px; font-size: 14px; }
</style>
